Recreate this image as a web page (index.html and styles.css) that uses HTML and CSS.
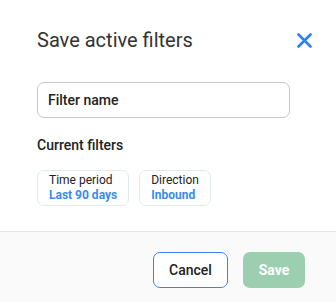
FILE: index.html
```html
<!DOCTYPE html>
<html>
<head>
<meta charset="utf-8">
<link rel="stylesheet" href="styles.css">
</head>
<body>
<div class="dialog">
  <div class="header">
    <h1 class="title">Save active filters</h1>
    <button class="close" aria-label="Close">
      <svg width="15" height="15" viewBox="0 0 15 15"><path d="M1.5 1.5 L13.5 13.5 M13.5 1.5 L1.5 13.5" stroke="#2f80ed" stroke-width="2.6" stroke-linecap="round"/></svg>
    </button>
  </div>
  <div class="content">
    <div class="input">Filter name</div>
    <div class="label">Current filters</div>
    <div class="chips">
      <div class="chip"><span class="chip-key">Time period</span><span class="chip-val">Last 90 days</span></div>
      <div class="chip"><span class="chip-key">Direction</span><span class="chip-val">Inbound</span></div>
    </div>
  </div>
  <div class="footer">
    <button class="btn cancel">Cancel</button>
    <button class="btn save">Save</button>
  </div>
</div>
</body>
</html>
```
FILE: styles.css
```css
html, body { margin: 0; padding: 0; background: #fff; }
body { font-family: Roboto, "Liberation Sans", sans-serif; color: #222; width: 336px; height: 302px; overflow: hidden; }
.dialog { display: flex; flex-direction: column; }
.header { display: flex; align-items: center; justify-content: space-between; padding: 28px 24px 0 37px; height: 24px; }
.title { margin: 0; font-size: 20px; font-weight: 400; color: #333; line-height: 24px; }
.close { border: 0; background: none; padding: 0; width: 15px; height: 15px; display: flex; }
.content { padding: 30px 46px 25px 37px; }
.input { border: 1px solid #c8c8c8; border-radius: 7px; box-sizing: border-box; height: 36px; padding: 0 10px; display: flex; align-items: center; font-size: 14px; font-weight: 500; color: #222; }
.label { margin-top: 19px; font-size: 14px; font-weight: 500; color: #222; line-height: 16px; }
.chips { display: flex; gap: 10px; margin-top: 17px; }
.chip { display: flex; flex-direction: column; border: 1px solid #e0ebee; border-radius: 7px; padding: 0 11px; height: 36px; box-sizing: border-box; font-size: 12px; line-height: 15.5px; justify-content: center; }
.chip-key { color: #222; font-weight: 400; }
.chip-val { color: #3b8beb; font-weight: 700; }
.footer { border-top: 1px solid #e6e6e6; background: #fafafa; display: flex; justify-content: flex-end; align-items: flex-start; gap: 15px; padding: 20px 31px 20px 0; }
.btn { font-family: Roboto, "Liberation Sans", sans-serif; font-size: 14px; height: 36px; border-radius: 7px; box-sizing: border-box; }
.cancel { width: 75px; border: 1px solid #3b82f6; background: #fff; color: #222; font-weight: 500; }
.save { width: 62px; border: 0; background: #9bcfb0; color: #fff; font-weight: 700; }
```
